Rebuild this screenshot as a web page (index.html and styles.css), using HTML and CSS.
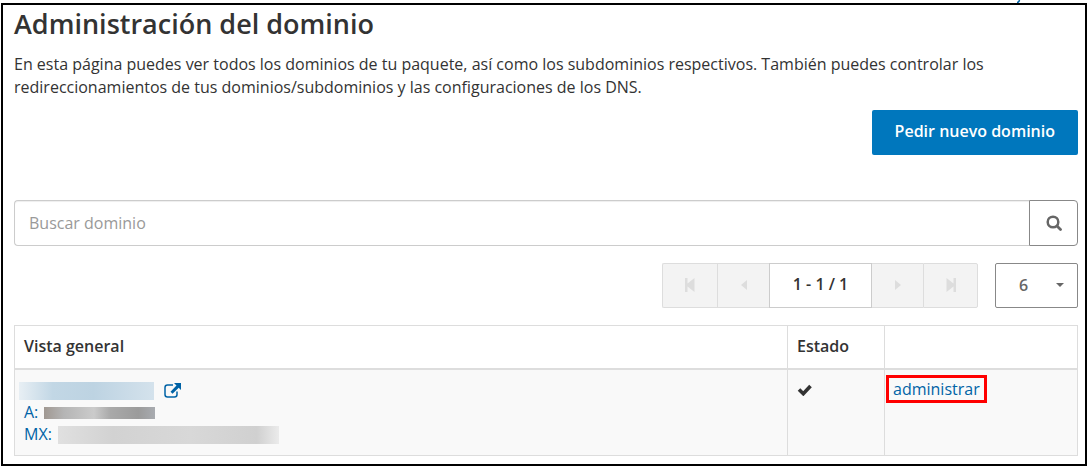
FILE: index.html
```html
<!DOCTYPE html>
<html lang="es">
<head>
  <meta charset="UTF-8">
  <meta name="viewport" content="width=device-width, initial-scale=1.0">
  <title>Administración del dominio</title>
  <link rel="stylesheet" href="styles.css">
</head>
<body>

  <div class="topbar">
    <svg width="4" height="3" viewBox="0 0 4 3"><path d="M0 2.500q2 0 2.500-2.500" fill="none" stroke="currentColor" stroke-width="1.500"/></svg>
  </div>

  <main class="panel">
    <h1>Administración del dominio</h1>
    <p class="intro">En esta página puedes ver todos los dominios de tu paquete, así como los subdominios respectivos. También puedes controlar los redireccionamientos de tus dominios/subdominios y las configuraciones de los DNS.</p>

    <div class="actions">
      <button type="button" class="btn-primary">Pedir nuevo dominio</button>
    </div>

    <form class="search">
      <input type="text" class="search-input" placeholder="Buscar dominio" aria-label="Buscar dominio">
      <button type="submit" class="search-btn" aria-label="Buscar">
        <svg width="16" height="16" viewBox="0 0 16 16"><circle cx="7" cy="7" r="5.300" fill="none" stroke="currentColor" stroke-width="2.500"/><path d="M11 11l3.500 3.500" stroke="currentColor" stroke-width="2.800" stroke-linecap="round"/></svg>
      </button>
    </form>

    <div class="toolbar">
      <div class="pager">
        <button type="button" class="edge" disabled aria-label="Primera página">
          <svg width="10" height="14" viewBox="0 0 10 14"><path d="M0 0h2.500v5.500L9.500 0v14L2.500 8.500V14H0z" fill="currentColor"/></svg>
        </button>
        <button type="button" disabled aria-label="Página anterior">
          <svg width="6" height="10" viewBox="0 0 6 10"><path d="M6 0v10L0 5z" fill="currentColor"/></svg>
        </button>
        <span class="pages">1 - 1 / 1</span>
        <button type="button" disabled aria-label="Página siguiente">
          <svg width="6" height="10" viewBox="0 0 6 10"><path d="M0 0v10l6-5z" fill="currentColor"/></svg>
        </button>
        <button type="button" class="edge" disabled aria-label="Última página">
          <svg width="10" height="14" viewBox="0 0 10 14"><path d="M10 0H7.500v5.500L.5 0v14l7-5.500V14H10z" fill="currentColor"/></svg>
        </button>
      </div>
      <div class="per-page">
        <select aria-label="Dominios por página">
          <option>6</option>
        </select>
        <svg class="caret" width="8" height="4" viewBox="0 0 8 4"><path d="M0 0h8L4 4z" fill="currentColor"/></svg>
      </div>
    </div>

    <table class="domains">
      <thead>
        <tr>
          <th>Vista general</th>
          <th class="col-status">Estado</th>
          <th class="col-action"></th>
        </tr>
      </thead>
      <tbody>
        <tr>
          <td>
            <div class="line">
              <span class="hidden-name"></span>
              <a href="#" class="open" aria-label="Abrir dominio">
                <svg width="17" height="15" viewBox="0 0 17 15"><path d="M9 2H3.500Q1 2 1 4.500v7Q1 14 3.500 14h7q2.500 0 2.500-2.500V8.500" fill="none" stroke="currentColor" stroke-width="1.500"/><path d="M10 0h7v7l-2.300-2.300-6.200 6-2-2 6-6.200z" fill="currentColor"/></svg>
              </a>
            </div>
            <div class="line"><a href="#">A:</a><span class="hidden-ip"></span></div>
            <div class="line"><a href="#">MX:</a><span class="hidden-mx"></span></div>
          </td>
          <td>
            <svg class="check" width="15" height="12" viewBox="0 0 15 12"><path d="M2 5.500l4.300 4.200L13.500 2" fill="none" stroke="currentColor" stroke-width="3.600"/></svg>
          </td>
          <td class="action"><a href="#" class="marked">administrar</a></td>
        </tr>
      </tbody>
    </table>
  </main>

</body>
</html>
```

FILE: styles.css
```css
* {
  box-sizing: border-box;
}

body {
  margin: 0;
  padding: 0 0 0 1px;
  background: #fff;
  color: #333;
  font-family: "Open Sans", "Noto Sans", sans-serif;
  font-size: 16px;
  line-height: 23px;
}

button,
input,
select {
  font: inherit;
  color: inherit;
}

svg {
  display: block;
}

a {
  color: #0063a6;
  text-decoration: none;
}

.topbar {
  display: flex;
  justify-content: flex-end;
  height: 3px;
  padding-right: 66px;
  color: #0063a6;
}

.panel {
  border: 2px solid #000;
  padding: 2px 7px 8px 11px;
}

h1 {
  margin: 0 0 12px;
  font-size: 27px;
  font-weight: 600;
  line-height: 34px;
}

.intro {
  margin: 0 0 11px;
}

.actions {
  display: flex;
  justify-content: flex-end;
  margin-bottom: 45px;
}

.btn-primary {
  height: 45px;
  padding: 0 23px 2px;
  border: 0;
  border-radius: 2px;
  background: #0077bd;
  color: #fff;
  font-weight: 600;
}

/* Buscador */
.search {
  display: flex;
  height: 46px;
  margin-bottom: 17px;
}

.search-input {
  flex: 1;
  min-width: 0;
  padding: 0 14px;
  border: 1px solid #ccc;
  border-right: 0;
  border-radius: 4px 0 0 4px;
  box-shadow: inset 0 1px 1px rgba(0, 0, 0, 0.07);
}

.search-input::placeholder {
  color: #999;
}

.search-btn {
  display: flex;
  align-items: center;
  justify-content: center;
  width: 49px;
  padding: 0;
  border: 1px solid #888;
  border-radius: 0 4px 4px 0;
  background: #fff;
  color: #666;
}

/* Paginación */
.toolbar {
  display: flex;
  justify-content: flex-end;
  gap: 17px;
  height: 45px;
  margin-bottom: 17px;
}

.pager {
  display: flex;
}

.pager button {
  display: flex;
  align-items: center;
  justify-content: center;
  width: 52px;
  padding: 0 0 2px;
  border: 1px solid #ddd;
  border-right: 0;
  background: #f3f3f3;
  color: #ddd;
}

.pager .edge {
  width: 55px;
}

.pager .edge:first-child {
  border-radius: 2px 0 0 2px;
}

.pager .edge:last-child {
  border-right: 1px solid #ddd;
  border-radius: 0 2px 2px 0;
}

.pager .pages {
  width: 103px;
  border: 1px solid #ccc;
  margin-right: -1px;
  font-weight: 600;
  line-height: 41px;
  text-align: center;
  z-index: 1;
}

.per-page {
  position: relative;
  width: 83px;
  color: #666;
}

.per-page select {
  width: 100%;
  height: 100%;
  padding: 0 23px;
  border: 1px solid #888;
  border-radius: 2px;
  background: #fff;
  font-weight: 600;
  appearance: none;
}

.caret {
  position: absolute;
  top: 20px;
  right: 14px;
  pointer-events: none;
}

/* Tabla de dominios */
.domains {
  width: 100%;
  border-collapse: collapse;
  table-layout: fixed;
}

.domains th,
.domains td {
  border: 1px solid #ddd;
  padding: 9px;
  text-align: left;
  vertical-align: top;
}

.domains th {
  height: 43px;
  border-bottom-width: 2px;
  font-weight: 600;
}

.domains td {
  background: #f9f9f9;
  padding-top: 10px;
}

.col-status {
  width: 97px;
}

.col-action {
  width: 193px;
}

.line {
  display: flex;
  align-items: center;
  height: 22px;
}

.hidden-name {
  width: 135px;
  height: 18px;
  margin-left: -5px;
  background: linear-gradient(to right, #e8eff4, #c2d7e5 25%, #bdd3e2 55%, #d4e2ec);
}

.open {
  margin-left: 10px;
}

.hidden-ip {
  width: 111px;
  height: 12px;
  margin-left: 6px;
  background: linear-gradient(to right, #a09892, #b5b5b5 18%, #cbcbcb 45%, #a9a9a9 60%, #9b9b9b 85%, #a8abb0);
}

.hidden-mx {
  width: 221px;
  height: 18px;
  margin-left: 6px;
  background: linear-gradient(to right, #e0e0e0, #d2d2d2 25%, #d8d8d8 60%, #d0d0d0 90%, #ebebeb);
}

.check {
  margin-top: 4px;
}

.domains .action {
  padding: 5px 1px;
}

.marked {
  display: inline-block;
  padding: 0 4px;
  border: 3px solid #f00;
  line-height: 22px;
}
```
